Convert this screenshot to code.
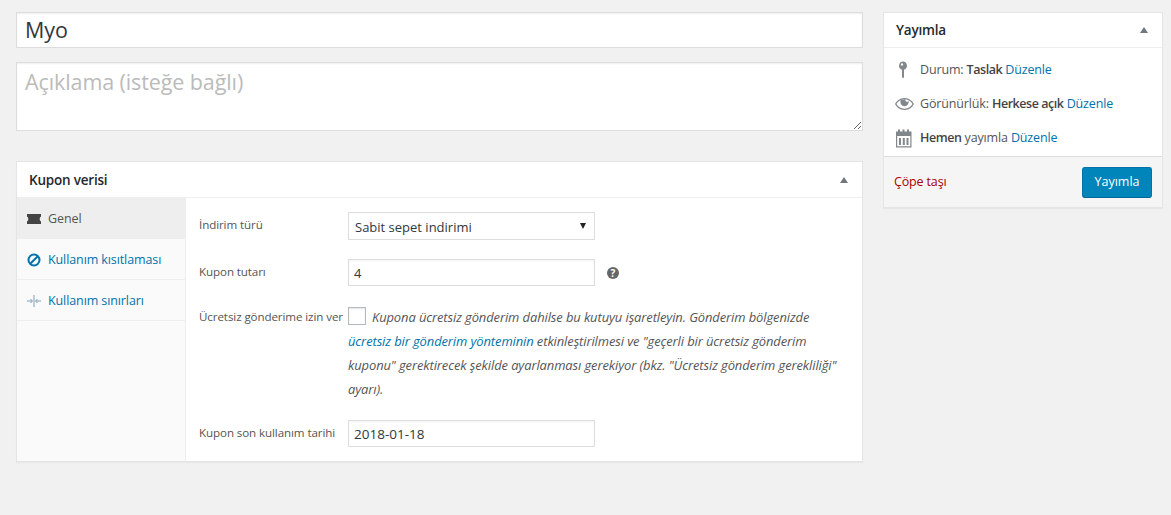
<div class="page">
  <main class="main">
    <input class="title" value="Myo" />
    <textarea class="desc" placeholder="Açıklama (isteğe bağlı)"></textarea>
    <section class="box coupon">
      <header class="box-head"><h2>Kupon verisi</h2><span class="caret"></span></header>
      <div class="coupon-body">
        <nav class="tabs">
          <a class="tab active" href="#a">
            <svg width="14" height="14" viewBox="0 0 14 14"><path fill="#444" d="M0 2H14V4.500C12.200 5.500 12.200 8.500 14 9.500V12H0V9.500C1.800 8.500 1.800 5.500 0 4.500z"/></svg>
            Genel</a>
          <a class="tab" href="#b">
            <svg width="14" height="14" viewBox="0 0 14 14"><circle cx="7" cy="7" r="5.500" fill="none" stroke="#0073aa" stroke-width="2"/><path d="M3.200 10.800 10.800 3.200" stroke="#0073aa" stroke-width="2"/></svg>
            Kullanım kısıtlaması</a>
          <a class="tab" href="#c">
            <svg width="14" height="14" viewBox="0 0 14 14" fill="none" stroke="#7c9fb8" stroke-width="1"><path d="M7 1v12M0 7h5M14 7H9M3.500 5 5.500 7l-2 2M10.500 5l-2 2 2 2"/></svg>
            Kullanım sınırları</a>
        </nav>
        <div class="fields">
          <div class="row r-type">
            <span class="lbl">İndirim türü</span>
            <div class="select-wrap"><select class="control"><option>Sabit sepet indirimi</option></select><span class="arrow"></span></div>
          </div>
          <div class="row r-amount">
            <span class="lbl">Kupon tutarı</span>
            <input class="control" value="4" />
            <svg class="help" width="12" height="12" viewBox="0 0 12 12"><circle cx="6" cy="6" r="6" fill="#666"/><text x="6" y="9.500" text-anchor="middle" class="help-q">?</text></svg>
          </div>
          <div class="row r-ship">
            <span class="lbl">Ücretsiz gönderime izin ver</span>
            <p class="ship"><span class="check"></span><em>Kupona ücretsiz gönderim dahilse bu kutuyu işaretleyin. Gönderim bölgenizde<br /><a href="#d">ücretsiz bir gönderim yönteminin</a> etkinleştirilmesi ve "geçerli bir ücretsiz gönderim<br />kuponu" gerektirecek şekilde ayarlanması gerekiyor (bkz. "Ücretsiz gönderim gerekliliği"<br />ayarı).</em></p>
          </div>
          <div class="row r-date">
            <span class="lbl">Kupon son kullanım tarihi</span>
            <input class="control date" value="2018-01-18" />
          </div>
        </div>
      </div>
    </section>
  </main>
  <aside class="box side">
    <header class="box-head"><h2>Yayımla</h2><span class="caret"></span></header>
    <div class="pub">
      <div class="pub-row">
        <svg width="20" height="20" viewBox="0 0 20 20"><path fill="#82878c" fill-rule="evenodd" d="M8 1.500a4.200 4.200 0 0 1 1 8.200V17l-1 1.500L7 17V9.700A4.200 4.200 0 0 1 8 1.500zM7 3.300a1.200 1.200 0 1 0 .01 0z"/></svg>
        <span>Durum: <b>Taslak</b> <a href="#e">Düzenle</a></span>
      </div>
      <div class="pub-row">
        <svg width="20" height="20" viewBox="0 0 20 20"><path fill="#82878c" fill-rule="evenodd" d="M9.500 4C14 4 17.500 7 19 10c-1.500 3-5 6-9.500 6S1.500 13 0 10C1.500 7 5 4 9.500 4zM9.500 5.300C5.700 5.300 2.800 7.700 1.500 10c1.300 2.300 4.200 4.700 8 4.700s6.700-2.400 8-4.700c-1.300-2.300-4.200-4.700-8-4.700z"/><path fill="#82878c" d="M5.700 6.200a4.200 4.200 0 1 0 7.600 0c.3 1.500-1.300 2-2.300 1.300-.6-.5-.7-1.400-.3-2.300a9 9 0 0 0-5 1z"/></svg>
        <span>Görünürlük: <b>Herkese açık</b> <a href="#f">Düzenle</a></span>
      </div>
      <div class="pub-row">
        <svg width="20" height="20" viewBox="0 0 20 20"><path fill="#82878c" fill-rule="evenodd" d="M1 3.500h2V1.500h2v2h2.500V1.500h2v2H12V1.500h2v2h2.500v16H1zM2.200 8v10.300h13.100V8z"/><path fill="#82878c" d="M4 10h2v7H4zM7.800 10h2v7h-2zM11.500 10h2v7h-2z"/></svg>
        <span><b>Hemen</b> yayımla <a href="#g">Düzenle</a></span>
      </div>
    </div>
    <footer class="pub-foot">
      <a class="trash" href="#h">Çöpe taşı</a>
      <button class="publish">Yayımla</button>
    </footer>
  </aside>
</div>

<style>
  :global(body) { margin: 0; background: #f1f1f1; }
  .page {
    display: flex; align-items: flex-start; gap: 20px;
    padding: 12px 8px 0 16px; height: 503px; box-sizing: border-box;
    font: 12.500px/18px "Open Sans", sans-serif; color: #444; letter-spacing: -0.15px;
    overflow: hidden;
  }
  a { color: #0073aa; text-decoration: none; }
  .main { width: 847px; flex: none; display: flex; flex-direction: column; }
  input, textarea, select { font-family: inherit; color: #32373c; box-sizing: border-box; outline: none; }
  .title {
    height: 36px; border: 1px solid #ddd; background: #fff; padding: 1px 8px 3px;
    font-size: 21.500px; line-height: 28px; letter-spacing: -0.1px; box-shadow: inset 0 1px 2px rgba(0,0,0,.07);
  }
  .desc {
    display: block; margin-top: 14px; height: 69px; border: 1px solid #ddd; background: #fff; padding: 5px 8px;
    font-size: 21.500px; line-height: 28px; letter-spacing: -0.1px; box-shadow: inset 0 1px 2px rgba(0,0,0,.07);
  }
  .desc::placeholder { color: #bbb; opacity: 1; }
  .box { background: #fff; border: 1px solid #e5e5e5; box-shadow: 0 1px 1px rgba(0,0,0,.04); box-sizing: border-box; }
  .coupon { margin-top: 30px; height: 301px; display: flex; flex-direction: column; }
  .box-head {
    height: 35px; flex: none; display: flex; align-items: center; justify-content: space-between;
    padding: 0 14px 0 12px; border-bottom: 1px solid #eee; box-sizing: border-box;
  }
  .coupon .box-head { height: 36px; }
  .box-head h2 { margin: 0; font-size: 13.500px; font-weight: 600; color: #23282d; letter-spacing: -0.2px; }
  .caret { width: 0; height: 0; border: 4px solid transparent; border-top: 0; border-bottom: 6px solid #72777c; }
  .coupon-body { flex: 1; display: flex; min-height: 0; }
  .tabs { width: 169px; flex: none; box-sizing: border-box; background: #fafafa; border-right: 1px solid #eee; display: flex; flex-direction: column; }
  .tab {
    height: 41px; box-sizing: border-box; display: flex; align-items: center; gap: 7px; padding: 1px 0 0 10px;
    border-bottom: 1px solid #eee; color: #0073aa; letter-spacing: -0.1px;
  }
  .tab.active { background: #eee; color: #555; }
  .fields { flex: 1; display: flex; flex-direction: column; }
  .row { display: flex; align-items: flex-start; padding-left: 13px; }
  .lbl { width: 149px; flex: none; font-size: 11.600px; color: #555; letter-spacing: -0.1px; }
  .r-type { margin-top: 14px; }
  .r-type .lbl { padding-top: 4px; }
  .r-amount { margin-top: 19px; align-items: center; }
  .r-amount .lbl { padding-bottom: 2px; }
  .r-ship { margin-top: 19px; }
  .r-ship .lbl { padding-top: 3px; white-space: nowrap; }
  .r-date { margin-top: 19px; align-items: center; }
  .r-date .lbl { padding-bottom: 2px; }
  .control {
    width: 247px; height: 27px; border: 1px solid #ddd; background: #fff; padding: 0 5px;
    font-size: 13px; letter-spacing: 0; display: block; box-shadow: inset 0 1px 2px rgba(0,0,0,.05);
  }
  .date { font-size: 13.500px; }
  .select-wrap { position: relative; }
  select.control { height: 28px; appearance: none; border-radius: 0; box-shadow: none; padding: 1px 0 0 6px; }
  .arrow { position: absolute; right: 9px; top: 11px; width: 0; height: 0; border: 3.500px solid transparent; border-top: 6px solid #222; border-bottom: 0; }
  .help { margin-left: 12px; }
  .help-q { font-size: 10px; font-weight: 700; fill: #fff; letter-spacing: 0; }
  .ship { margin: 0; width: 492px; line-height: 24px; font-size: 12.950px; color: #555; white-space: nowrap; letter-spacing: -0.1px; }
  .check {
    display: inline-block; width: 16px; height: 16px; border: 1px solid #b4b9be; background: #fff; vertical-align: -3px; margin-right: 6px;
    box-shadow: inset 0 1px 2px rgba(0,0,0,.1);
  }
  .side { width: 280px; flex: none; }
  .pub { padding: 5px 0 1px; }
  .pub-row { height: 34px; display: flex; align-items: center; gap: 5px; padding-left: 11px; color: #555; }
  .pub-row b { font-weight: 600; color: #444; letter-spacing: -0.45px; }
  .pub-foot {
    display: flex; align-items: center; justify-content: space-between; height: 51px; box-sizing: border-box;
    padding: 0 10px 0 10px; background: #f5f5f5; border-top: 1px solid #ddd;
  }
  .trash { color: #a00; }
  .publish {
    width: 70px; height: 31px; background: #0085ba; border: 1px solid #0073aa; border-bottom-color: #006799; border-radius: 3px;
    color: #fff; font: inherit; font-size: 12.500px; padding: 0;
  }
</style>
